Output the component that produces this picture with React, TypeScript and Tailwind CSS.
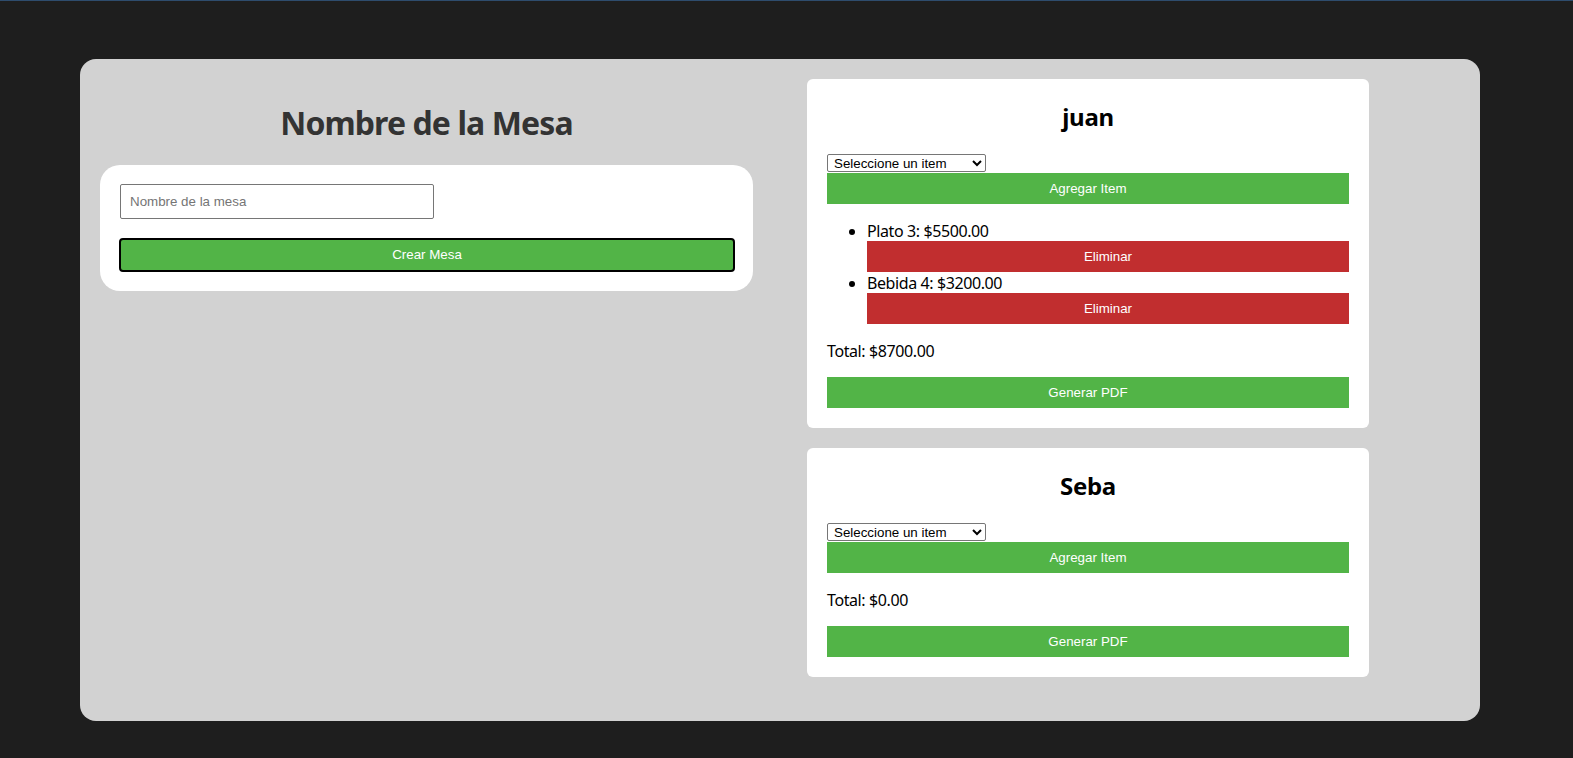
import React from "react";

function MesaCard({ name, items, total }: { name: string; items: string[]; total: string }) {
  return (
    <div className="bg-white rounded-[6px] p-5 w-[562px]">
      <h2 className="text-[24px] font-bold text-black text-center leading-[36px] mb-5 font-['Noto_Sans',sans-serif] tracking-[-0.3px]">
        {name}
      </h2>
      <select
        className="block w-[159px] h-[18px] -mt-[1px] mb-[1px] border border-[#767676] rounded-[2px] text-[13.33px] leading-[15px] text-black bg-white pl-[2px] appearance-auto font-['Liberation_Sans',Arial,sans-serif]"
        defaultValue=""
      >
        <option value="">Seleccione un item</option>
      </select>
      <button className="block w-full h-[31px] bg-[#52b447] text-white text-[13.33px] font-['Liberation_Sans',Arial,sans-serif]">
        Agregar Item
      </button>
      {items.length > 0 && (
        <ul className="list-disc pl-10 mt-4 text-[16px] leading-[21px] text-black font-['Noto_Sans',sans-serif] tracking-[-0.4px]">
          {items.map((it) => (
            <li key={it} className="pt-[1px]">
              {it}
              <button className="block w-full h-[31px] mt-[-1px] bg-[#c12e2f] text-white text-[13.33px] tracking-normal font-['Liberation_Sans',Arial,sans-serif]">
                Eliminar
              </button>
            </li>
          ))}
        </ul>
      )}
      <p className="my-4 pt-[1px] text-[16px] leading-[21px] text-black font-['Noto_Sans',sans-serif] tracking-[-0.4px]">
        Total: {total}
      </p>
      <button className="block w-full h-[31px] mt-[-1px] bg-[#52b447] text-white text-[13.33px] font-['Liberation_Sans',Arial,sans-serif]">
        Generar PDF
      </button>
    </div>
  );
}

export default function App() {
  return (
    <div className="min-h-[758px] w-full bg-[#1e1e1e] border-t border-[#2e4c6d] overflow-hidden">
      <div className="ml-20 mt-[58px] w-[1400px] h-[662px] bg-[#d2d2d2] rounded-[16px] px-5 pt-5 flex items-start">
        <div className="w-[653px]">
          <h1 className="text-[32px] font-bold text-[#333] text-center leading-[43px] mt-[22px] mb-[21px] font-['Noto_Sans',sans-serif] tracking-[-0.9px]">
            Nombre de la Mesa
          </h1>
          <div className="bg-white rounded-[20px] pl-[19px] pr-[18px] pt-[19px] pb-[19px]">
            <input
              placeholder="Nombre de la mesa"
              className="block w-[314px] h-[35px] ml-[1px] border border-[#767676] rounded-[2px] px-[9px] text-[13.33px] text-black placeholder:text-[#757575] outline-none font-['Liberation_Sans',Arial,sans-serif]"
            />
            <button className="block w-full h-[34px] mt-[19px] bg-[#52b447] text-white text-[13.33px] border-2 border-black rounded-[4px] font-['Liberation_Sans',Arial,sans-serif]">
              Crear Mesa
            </button>
          </div>
        </div>
        <div className="ml-[54px] flex flex-col gap-5">
          <MesaCard name="juan" items={["Plato 3: $5500.00", "Bebida 4: $3200.00"]} total="$8700.00" />
          <MesaCard name="Seba" items={[]} total="$0.00" />
        </div>
      </div>
    </div>
  );
}
